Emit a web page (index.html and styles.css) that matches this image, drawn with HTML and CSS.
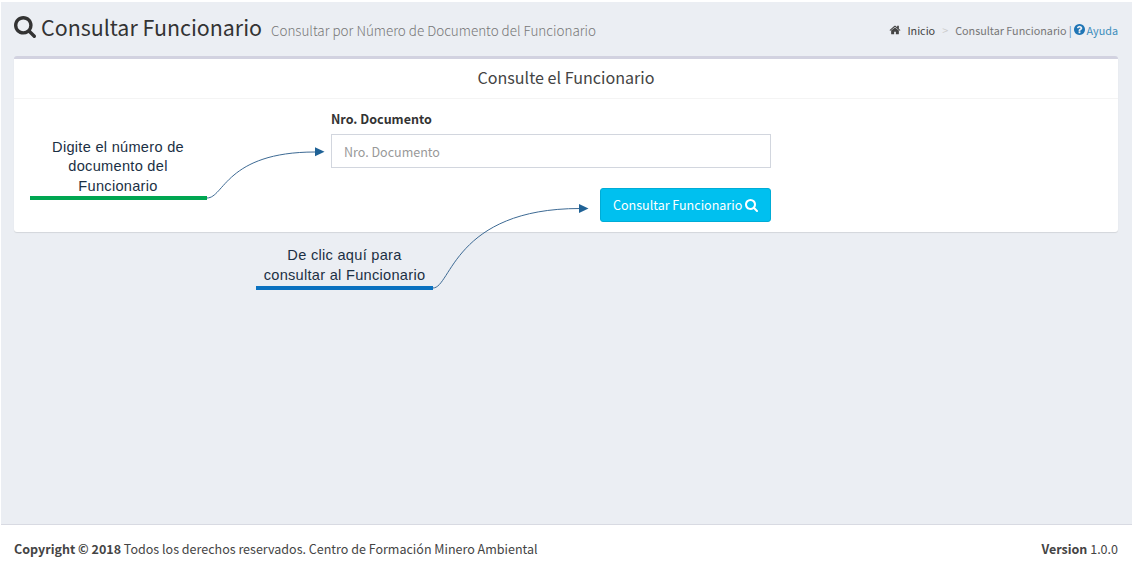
FILE: index.html
```html
<!DOCTYPE html>
<html lang="es">
<head>
<meta charset="utf-8">
<title>Consultar Funcionario</title>
<link rel="stylesheet" href="styles.css">
</head>
<body>
<svg class="defs" width="0" height="0">
  <symbol id="search" viewBox="0 0 1664 1664"><path d="M1152 704q0-185-131.500-316.500t-316.500-131.500-316.500 131.500-131.500 316.500 131.500 316.500 316.500 131.500 316.500-131.500 131.500-316.500zm512 832q0 52-38 90t-90 38q-54 0-90-38l-343-342q-179 124-399 124-143 0-273.500-55.500t-225-150-150-225-55.500-273.500 55.500-273.500 150-225 225-150 273.500-55.500 273.500 55.500 225 150 150 225 55.500 273.500q0 220-124 399l343 343q37 37 37 90z"/></symbol>
  <symbol id="home" viewBox="0 0 1792 1792"><path d="M1472 992v480q0 26-19 45t-45 19h-384v-384h-256v384h-384q-26 0-45-19t-19-45v-480q0-1 .5-3t.5-3l575-474 575 474q1 2 1 6zm223-69l-62 74q-8 9-21 11h-3q-13 0-21-7l-692-577-692 577q-12 8-24 7-13-2-21-11l-62-74q-8-10-7-23.500t11-21.500l719-599q32-26 76-26t76 26l244 204v-195q0-14 9-23t23-9h192q14 0 23 9t9 23v408l219 182q10 8 11 21.500t-7 23.500z"/></symbol>
  <symbol id="question" viewBox="128 128 1536 1536"><path d="M1024 1376v-192q0-14-9-23t-23-9h-192q-14 0-23 9t-9 23v192q0 14 9 23t23 9h192q14 0 23-9t9-23zm256-672q0-88-55.500-163t-138.500-116-170-41q-243 0-371 213-15 24 8 42l132 100q7 6 19 6 16 0 25-12 53-68 86-92 34-24 86-24 48 0 85.500 26t37.500 59q0 38-20 61t-68 45q-63 28-115.500 86.500t-52.500 125.500v36q0 14 9 23t23 9h192q14 0 23-9t9-23q0-19 21.500-49.500t54.500-49.500q32-18 49-28.500t46-35 44.500-48 28-60.500 12.500-81zm384 192q0 209-103 385.500t-279.500 279.500-385.500 103-385.500-103-279.500-279.500-103-385.500 103-385.500 279.500-279.500 385.500-103 385.500 103 279.500 279.500 103 385.500z"/></symbol>
</svg>
<div class="wrapper">
  <main class="content">
    <header class="content-header">
      <h1 class="title"><svg class="icon-title"><use href="#search"/></svg><span class="title-text">Consultar Funcionario</span><small class="subtitle">Consultar por Número de Documento del Funcionario</small></h1>
      <nav class="breadcrumb">
        <svg class="icon-home"><use href="#home"/></svg><a class="crumb-home">Inicio</a><span class="sep">&gt;</span><span class="crumb">Consultar Funcionario</span><span class="bar">|</span><svg class="icon-help"><use href="#question"/></svg><a class="help">Ayuda</a>
      </nav>
    </header>
    <section class="box">
      <h3 class="box-title"><span>Consulte el Funcionario</span></h3>
      <form class="form">
        <label class="label" for="doc">Nro. Documento</label>
        <input class="input" id="doc" type="text" placeholder="Nro. Documento">
        <button class="button" type="button"><span>Consultar Funcionario</span><svg class="icon-button"><use href="#search"/></svg></button>
      </form>
    </section>
  </main>
  <footer class="footer">
    <div class="copy"><strong>Copyright © 2018</strong> Todos los derechos reservados. Centro de Formación Minero Ambiental</div>
    <div class="version"><strong>Version</strong> 1.0.0</div>
  </footer>
  <div class="note note-green">Digite el número de<br>documento del<br>Funcionario</div>
  <div class="note note-blue">De clic aquí para<br>consultar al Funcionario</div>
  <svg class="arrows" width="1134" height="575" viewBox="0 0 1134 575">
    <path class="line" d="M207 198C224 198 226 152 315 152"/>
    <path class="head" d="M315 147.300L324.500 151.800L315 156.300Z"/>
    <path class="line" d="M433 288C451 288 454 208.500 580 208.500"/>
    <path class="head" d="M579 204L588.500 208.500L579 213Z"/>
  </svg>
</div>
</body>
</html>
```
FILE: styles.css
```css
* { box-sizing: border-box; }
body {
  margin: 0;
  background: #fff;
  color: #333;
  font-family: "Noto Sans CJK SC", "Noto Sans", sans-serif;
  font-size: 12.520px;
  line-height: 20px;
}
svg { display: block; fill: currentColor; flex: none; }
.defs { position: absolute; }
.wrapper {
  position: relative;
  width: 1134px;
  height: 575px;
  padding: 2px 2px 0 1px;
  display: flex;
  flex-direction: column;
  overflow: hidden;
}
.content { height: 522px; background: #ebeef3; padding: 0 14px 0 13px; }
.content-header { height: 54px; display: flex; justify-content: space-between; }
.title { margin: 0; height: 50px; display: flex; align-items: center; font-weight: 400; color: #333; }
.icon-title { width: 22px; height: 22px; margin-right: 5px; }
.title-text { font-size: 21.420px; width: 221px; margin-right: 9px; padding-bottom: 1px; white-space: nowrap; }
.subtitle { font-size: 13.450px; font-weight: 300; color: #777; white-space: nowrap; padding-top: 5px; }
.breadcrumb { height: 55px; display: flex; align-items: center; font-size: 10.800px; color: #777; white-space: nowrap; }
.icon-home { width: 12px; height: 12px; margin-right: 6px; color: #444; }
.crumb-home { color: #444; }
.sep { color: #ccc; margin: 0 7px; }
.bar { margin: 0 2px; color: #4c8abb; }
.icon-help { width: 11px; height: 11px; margin-right: 2px; color: #1f75b5; }
.help { color: #3c8dbc; }
.box {
  height: 176px;
  background: #fff;
  border-top: 3px solid #d2d2e0;
  border-radius: 3px;
  box-shadow: 0 1px 1px rgba(0, 0, 0, .1);
}
.box-title {
  margin: 0;
  height: 40px;
  padding-bottom: 3px;
  display: flex;
  align-items: center;
  justify-content: center;
  border-bottom: 1px solid #f4f4f4;
  font-size: 16.100px;
  font-weight: 400;
  color: #444;
}
.form { width: 440px; margin-left: 317px; padding-top: 10px; display: flex; flex-direction: column; }
.label { font-weight: 700; height: 25px; }
.input {
  height: 34px;
  padding: 0 12px;
  border: 1px solid #d2d6de;
  border-radius: 0;
  background: #fff;
  font: inherit;
}
.input::placeholder { color: #999; opacity: 1; }
.button {
  align-self: flex-end;
  width: 171px;
  height: 34px;
  margin-top: 20px;
  padding: 0 12px;
  display: flex;
  align-items: center;
  justify-content: space-between;
  border: 1px solid #00acd6;
  border-radius: 3px;
  background: #00c0ef;
  color: #fff;
  font: inherit;
  white-space: nowrap;
}
.icon-button { width: 13px; height: 13px; }
.footer {
  height: 51px;
  border-top: 1px solid #d8dae2;
  padding: 14px 14px 0 13px;
  display: flex;
  justify-content: space-between;
  color: #444;
}
.note {
  position: absolute;
  width: 177px;
  text-align: center;
  font: 14.600px/19.500px "Liberation Sans", Arial, sans-serif;
  letter-spacing: .28px;
  color: #1b3044;
  white-space: nowrap;
}
.note-green { left: 29.500px; top: 137.500px; height: 62.500px; border-bottom: 4px solid #00a651; }
.note-blue { left: 256px; top: 246px; height: 44px; border-bottom: 4px solid #0b72c0; }
.arrows { position: absolute; left: 0; top: 0; }
.line { fill: none; stroke: #3d6a94; stroke-width: 1; }
.head { fill: #1f6296; }
```
